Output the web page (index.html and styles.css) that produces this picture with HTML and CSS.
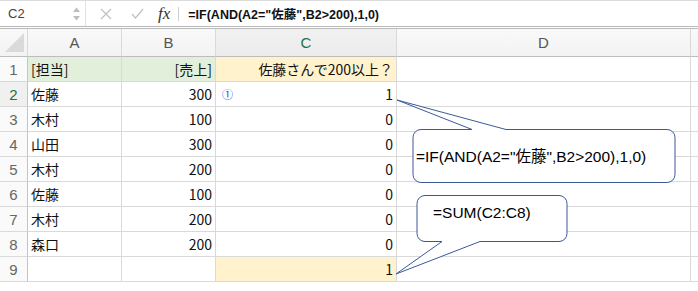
FILE: index.html
```html
<!DOCTYPE html>
<html lang="ja">
<head>
    <meta charset="UTF-8">
    <title>Sheet</title>
    <link rel="stylesheet" href="styles.css">
</head>
<body>
    <div class="formula-bar">
        <div class="name-box">C2</div>
        <div class="spin">
            <svg width="9" height="16" viewBox="0 0 9 16"><path d="M1 6 L4.5 1.5 L8 6 Z M1 10 L4.5 14.5 L8 10 Z" fill="#bdbdbd"/></svg>
        </div>
        <div class="bar-tools">
            <svg class="tool cancel" width="12" height="12" viewBox="0 0 12 12"><path d="M1 1 L11 11 M11 1 L1 11" stroke="#c2c2c2" stroke-width="1.3" fill="none"/></svg>
            <svg class="tool ok" width="13" height="11" viewBox="0 0 13 11"><path d="M1 6 L4.5 10 L12 1" stroke="#c2c2c2" stroke-width="1.3" fill="none"/></svg>
            <span class="fx">fx</span>
        </div>
        <div class="formula">=IF(AND(A2="佐藤",B2&gt;200),1,0)</div>
    </div>

    <div class="sheet">
        <div class="hd corner"><span class="tri"></span></div>
        <div class="hd">A</div>
        <div class="hd">B</div>
        <div class="hd sel">C</div>
        <div class="hd">D</div>
        <div class="hd last"></div>

        <div class="rn">1</div>
        <div class="c green">[担当]</div>
        <div class="c green num">[売上]</div>
        <div class="c yellow num">佐藤さんで200以上？</div>
        <div class="c"></div>
        <div class="c last"></div>

        <div class="rn sel">2</div>
        <div class="c">佐藤</div>
        <div class="c num">300</div>
        <div class="c num"><span class="tag">①</span>1</div>
        <div class="c"></div>
        <div class="c last"></div>

        <div class="rn">3</div>
        <div class="c">木村</div>
        <div class="c num">100</div>
        <div class="c num">0</div>
        <div class="c"></div>
        <div class="c last"></div>

        <div class="rn">4</div>
        <div class="c">山田</div>
        <div class="c num">300</div>
        <div class="c num">0</div>
        <div class="c"></div>
        <div class="c last"></div>

        <div class="rn">5</div>
        <div class="c">木村</div>
        <div class="c num">200</div>
        <div class="c num">0</div>
        <div class="c"></div>
        <div class="c last"></div>

        <div class="rn">6</div>
        <div class="c">佐藤</div>
        <div class="c num">100</div>
        <div class="c num">0</div>
        <div class="c"></div>
        <div class="c last"></div>

        <div class="rn">7</div>
        <div class="c">木村</div>
        <div class="c num">200</div>
        <div class="c num">0</div>
        <div class="c"></div>
        <div class="c last"></div>

        <div class="rn">8</div>
        <div class="c">森口</div>
        <div class="c num">200</div>
        <div class="c num">0</div>
        <div class="c"></div>
        <div class="c last"></div>

        <div class="rn">9</div>
        <div class="c"></div>
        <div class="c"></div>
        <div class="c yellow num">1</div>
        <div class="c"></div>
        <div class="c last"></div>
    </div>

    <!-- callouts drawn over the grid -->
    <svg class="callouts" width="698" height="291" viewBox="0 0 698 291">
        <path class="bubble" d="M421 129.5 H472 L397 100 L506 129.5 H667 A8 8 0 0 1 675 137.5 V174.5 A8 8 0 0 1 667 182.5 H421 A8 8 0 0 1 413 174.5 V137.5 A8 8 0 0 1 421 129.5 Z"/>
        <text class="bubble-text" x="416" y="162">=IF(AND(A2="佐藤",B2&gt;200),1,0)</text>
        <path class="bubble" d="M425 195.5 H559 A8 8 0 0 1 567 203.5 V233.5 A8 8 0 0 1 559 241.5 H480 L396 274 L442 241.5 H425 A8 8 0 0 1 417 233.5 V203.5 A8 8 0 0 1 425 195.5 Z"/>
        <text class="bubble-text" x="433" y="218">=SUM(C2:C8)</text>
    </svg>
</body>
</html>
```

FILE: styles.css
```css
body {
    margin: 0;
    width: 698px;
    height: 291px;
    overflow: hidden;
    position: relative;
    background: #fff;
    font-family: "Noto Sans CJK JP", "Noto Sans", sans-serif;
}
.formula-bar {
    height: 29px;
    box-sizing: border-box;
    border-top: 1px solid #dcdcdc;
    border-bottom: 3px double #b9b9b9;
    display: flex;
    align-items: center;
    background: #fff;
}
.name-box {
    width: 64px;
    padding-left: 8px;
    font-family: "Liberation Sans", sans-serif;
    font-size: 13px;
    color: #444;
}
.spin {
    width: 13px;
    height: 100%;
    display: flex;
    align-items: center;
    border-right: 1px solid #e2e2e2;
}
.bar-tools {
    display: flex;
    align-items: center;
    height: 100%;
    padding-left: 14px;
}
.cancel { margin-right: 19px; }
.ok { margin-right: 14px; }
.fx {
    font-family: "Liberation Serif", serif;
    font-style: italic;
    font-size: 17px;
    color: #333;
    padding-right: 8px;
    border-right: 1px solid #cfcfcf;
    line-height: 14px;
}
.formula {
    padding-left: 9px;
    font-family: "Liberation Sans", "Noto Sans CJK JP", sans-serif;
    font-size: 12.5px;
    font-weight: bold;
    color: #111;
}
.sheet {
    display: grid;
    grid-template-columns: 28px 94px 94px 181px 294px 1fr;
    grid-template-rows: 28px repeat(9, 25px) 9px;
}
.sheet > div {
    box-sizing: border-box;
    border-right: 1px solid #d9d9d9;
    border-bottom: 1px solid #d9d9d9;
    display: flex;
    align-items: center;
    overflow: hidden;
    white-space: nowrap;
}
.sheet > .last { border-right: none; }
.hd {
    justify-content: center;
    background: linear-gradient(#f9f9f9, #f3f3f3);
    font-family: "Liberation Sans", sans-serif;
    font-size: 15px;
    color: #555;
    border-bottom-color: #bdbdbd !important;
}
.hd.sel {
    background: linear-gradient(#f1f1f1, #ececec);
    color: #217346;
}
.corner { position: relative; }
.tri {
    position: absolute;
    right: 3px;
    bottom: 4px;
    width: 0;
    height: 0;
    border-left: 19px solid transparent;
    border-bottom: 19px solid #dadada;
}
.rn {
    justify-content: center;
    background: #fafafa;
    font-family: "Liberation Sans", sans-serif;
    font-size: 15px;
    color: #666;
    border-right-color: #c4c4c4 !important;
}
.rn.sel {
    color: #217346;
    background: #f0f0f0;
}
.c {
    padding: 0 3px;
    font-size: 14px;
    color: #111;
}
.num { justify-content: flex-end; }
.green { background: #e2efda; }
.yellow { background: #fff2cc; }
.tag {
    margin-right: auto;
    font-size: 11px;
    color: #1d3fe0;
    padding-left: 3px;
}
.callouts {
    position: absolute;
    left: 0;
    top: 0;
    pointer-events: none;
}
.bubble {
    fill: #fff;
    stroke: #3b5998;
    stroke-width: 1;
}
.bubble-text {
    font-family: "Liberation Sans", "Noto Sans CJK JP", sans-serif;
    font-size: 15.5px;
    fill: #000;
}
```
